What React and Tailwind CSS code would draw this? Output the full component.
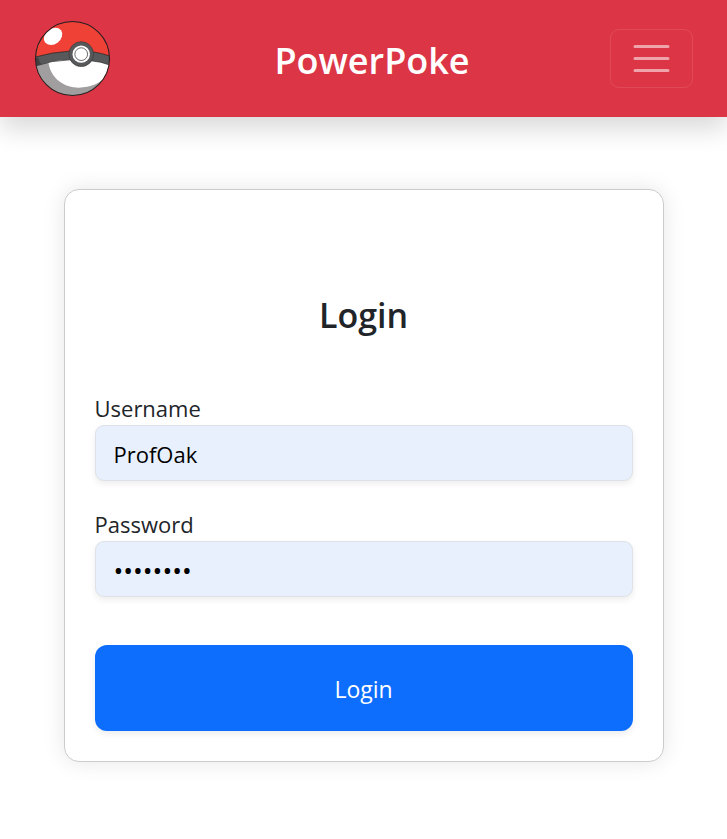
import { useState } from "react";

function Pokeball() {
  return (
    <svg viewBox="34 33 224 224" className="h-[75px] w-[75px]" role="img" aria-label="PowerPoke logo">
      <defs>
        <clipPath id="ball">
          <circle cx="146" cy="145" r="110" />
        </clipPath>
      </defs>
      <g clipPath="url(#ball)">
        <rect x="33" y="32" width="226" height="226" fill="#ef4136" />
        <path d="M33 160Q146 125 259 160V260H33Z" fill="#ffffff" />
        <path
          d="M33 165C52 158 64 156 74 157C82 207 122 232 165 232C200 231 230 220 248 196L259 260H33Z"
          fill="#a09e9e"
        />
        <path
          d="M33 141Q84 126 138 123L205 125Q234 129 259 138V165Q230 154 203 152L138 149Q84 150 33 168Z"
          fill="#58595b"
          stroke="#231f20"
          strokeWidth="2"
        />
        <path d="M33 141L45 144Q46 155 53 162L33 168Z" fill="#414042" />
        <ellipse cx="88" cy="79" rx="30" ry="23" transform="rotate(-38 88 79)" fill="#ffffff" />
      </g>
      <circle cx="172" cy="132" r="37" fill="#58595b" stroke="#3a3839" strokeWidth="2" />
      <circle cx="172" cy="132" r="26" fill="#ffffff" />
      <circle cx="172" cy="132" r="19" fill="#ffffff" stroke="#231f20" strokeWidth="2" />
      <circle cx="146" cy="145" r="110.5" fill="none" stroke="#231f20" strokeWidth="3" />
    </svg>
  );
}

function Header() {
  return (
    <header className="flex items-center justify-between bg-[#dc3545] py-[21px] pr-[34px] pl-[35px] shadow-[0_12px_24px_rgba(0,0,0,0.15)]">
      <a href="#home" className="mr-6">
        <Pokeball />
      </a>
      <h1 className="pt-1 text-[36px] leading-[54px] font-semibold text-white">PowerPoke</h1>
      <button
        type="button"
        aria-label="Toggle navigation"
        className="rounded-[9px] border border-white/10 px-[18px] py-1.5"
      >
        <svg viewBox="0 0 30 30" className="block h-[45px] w-[45px]" aria-hidden="true">
          <path
            d="M4 7h22M4 15h22M4 23h22"
            stroke="#ffffff"
            strokeOpacity="0.55"
            strokeWidth="2"
            strokeLinecap="round"
            strokeMiterlimit="10"
          />
        </svg>
      </button>
    </header>
  );
}

function Field({ id, label, ...props }) {
  return (
    <div className="flex flex-col">
      <label htmlFor={id} className="pt-0.5 text-[22px] leading-[34px]">
        {label}
      </label>
      <input
        id={id}
        className="h-14 w-full rounded-[9px] border border-[#dee2e6] bg-[#e8f0fe] px-[18px] pt-0.5 text-[22px] text-black shadow-[0_3px_6px_rgba(0,0,0,0.075)] [&[type=password]]:text-[26px]"
        {...props}
      />
    </div>
  );
}

export default function App() {
  const [username, setUsername] = useState("ProfOak");
  const [password, setPassword] = useState("pikachu1");

  return (
    <div className="min-h-screen bg-white font-['Open_Sans','Noto_Sans',sans-serif] text-[#212529]">
      <Header />
      <main className="px-6 py-[72px]">
        <form
          onSubmit={(e) => e.preventDefault()}
          className="mx-auto flex w-full max-w-[600px] flex-col rounded-[15px] border border-[#cccccc] bg-white px-[30px] pt-24 pb-[30px] shadow-[0_0_22px_rgba(0,0,0,0.1)]"
        >
          <h2 className="mb-11 text-center text-[34px] leading-[59px] font-semibold">Login</h2>
          <div className="flex flex-col gap-6">
            <Field
              id="username"
              label="Username"
              type="text"
              value={username}
              onChange={(e) => setUsername(e.target.value)}
            />
            <Field
              id="password"
              label="Password"
              type="password"
              value={password}
              onChange={(e) => setPassword(e.target.value)}
            />
          </div>
          <button
            type="submit"
            className="mt-12 h-[86px] rounded-xl bg-[#0d6efd] pt-0.5 text-[23px] text-white shadow-[0_3px_6px_rgba(0,0,0,0.075)]"
          >
            Login
          </button>
        </form>
      </main>
    </div>
  );
}
